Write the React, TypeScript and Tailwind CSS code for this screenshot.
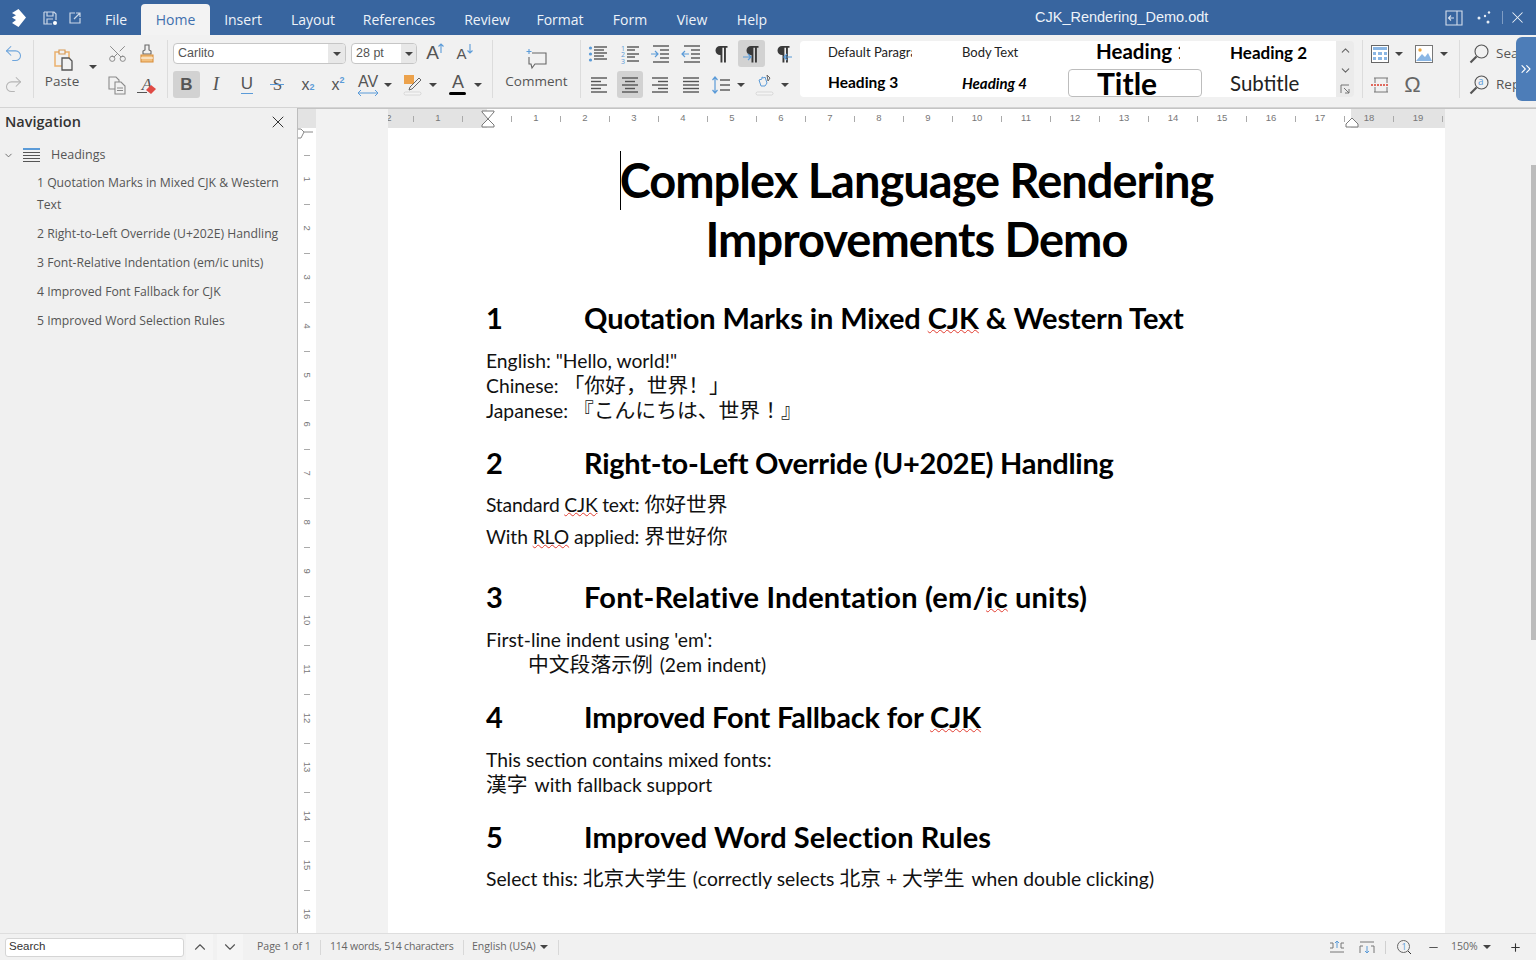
import React from "react";
import { Undo2, Redo2, Scissors, ChevronUp, ChevronDown, ChevronsRight, X, Plus, Minus } from "lucide-react";

const ui = "font-['Open_Sans',sans-serif]";
const doc = "font-['Lato','Noto_Sans_CJK_SC',sans-serif]";
const blue = "#5b9bd8";

const Caret = ({ className = "" }: { className?: string }) => (
  <span className={`flex w-[10px] items-center justify-center ${className}`}>
    <span className="h-0 w-0 border-x-[4px] border-t-[4px] border-x-transparent border-t-[#444]" />
  </span>
);

const Sep = () => <div className="mt-[5px] h-[58px] w-px shrink-0 bg-[#dcdcdc]" />;

const Cell = ({ w = 30, active, className = "", children }: { w?: number; active?: boolean; className?: string; children?: React.ReactNode }) => (
  <span
    style={{ width: w }}
    className={`flex h-[27px] shrink-0 items-center justify-center rounded-[3px] ${active ? "bg-[#d2d2d2]" : ""} ${className}`}
  >
    {children}
  </span>
);

const Row = ({ className = "", children }: { className?: string; children: React.ReactNode }) => (
  <div className={`flex h-[27px] items-center ${className}`}>{children}</div>
);

const Ic = ({ s = 20, children }: { s?: number; children: React.ReactNode }) => (
  <svg width={s} height={s} viewBox="0 0 20 20" fill="none" strokeWidth="1.2">
    {children}
  </svg>
);

const Lines = ({ rows }: { rows: number[][] }) => (
  <>
    {rows.map(([y, a, b], i) => (
      <path key={i} d={`M${a} ${y}H${b}`} stroke="#555" strokeWidth="1.4" />
    ))}
  </>
);

const Pilcrow = ({ fill = "#3a3a3a" }: { fill?: string }) => (
  <path d="M9 2h7.5v1.8h-1.6V18.5H13V3.8h-1.6v14.7H9.5v-7.5H9a4.5 4.5 0 0 1 0-9z" fill={fill} />
);

const Arrow = ({ y, from, to }: { y: number; from: number; to: number }) => (
  <path
    d={`M${from} ${y}H${to}M${to + (to > from ? -3 : 3)} ${y - 3}L${to} ${y}L${to + (to > from ? -3 : 3)} ${y + 3}`}
    stroke={blue}
    strokeWidth="1.2"
  />
);

const Lens = () => (
  <svg width="22" height="22" viewBox="0 0 22 22" fill="none" stroke="#555">
    <circle cx="13.5" cy="8.5" r="6.5" strokeWidth="1.1" />
    <path d="M8.5 13.5L2.5 19.5" strokeWidth="2.2" />
  </svg>
);

const tabs: [string, number][] = [
  ["File", 50],
  ["Home", 69],
  ["Insert", 66],
  ["Layout", 74],
  ["References", 98],
  ["Review", 78],
  ["Format", 68],
  ["Form", 72],
  ["View", 52],
  ["Help", 68],
];

const TitleBar = () => (
  <div className={`flex h-[35px] shrink-0 items-end bg-[#38659f] text-[14px] text-[#eef3f9] ${ui}`}>
    <div className="flex h-[35px] w-[35px] items-center justify-center">
      <svg width="18" height="20" viewBox="0 0 18 20">
        <path d="M3 5l6.5-4L17 9.5 9.5 19l-6.5-4 4-3-4-2.5 4-2.2z" fill="#fff" />
      </svg>
    </div>
    <div className="flex h-[35px] w-[56px] items-center">
      <span className="ml-[2px] flex w-[25px] justify-center">
        <svg width="16" height="16" viewBox="0 0 16 16" fill="none" stroke="#c9d6e7" strokeWidth="1.2">
          <path d="M2 2h10l2 2v6M2 2v12h8M5 2v4h6V2M5 14V9h6" />
          <circle cx="13" cy="13" r="2" fill="#fff" stroke="none" />
        </svg>
      </span>
      <span className="flex w-[25px] justify-center">
        <svg width="14" height="14" viewBox="0 0 14 14" fill="none" stroke="#c9d6e7" strokeWidth="1.2">
          <path d="M7 2H2v10h10V7M6 8l6-6M8 2h4v4" />
        </svg>
      </span>
    </div>
    {tabs.map(([t, w]) => (
      <div
        key={t}
        style={{ width: w }}
        className={
          t === "Home"
            ? "flex h-[31px] items-center justify-center rounded-t-[4px] bg-[#f3f3f3] pb-[1px] text-[#3f70ae]"
            : "flex h-[31px] items-center justify-center pb-[1px]"
        }
      >
        {t}
      </div>
    ))}
    <div className="flex h-[35px] flex-1 items-center">
      <span className="ml-[249px] font-['Liberation_Sans',sans-serif] text-[14.5px]">CJK_Rendering_Demo.odt</span>
      <span className="ml-[237px] flex items-center">
        <svg width="18" height="16" viewBox="0 0 18 16" fill="none" stroke="#d5dfec" strokeWidth="1.1">
          <path d="M1 1h16v14H1zM12 1v14M9 8H4M6 5.5L3.5 8 6 10.5" />
        </svg>
      </span>
      <span className="ml-[14px] flex">
        <svg width="14" height="14" viewBox="0 0 14 14" fill="#e6edf5">
          <circle cx="2" cy="7" r="1.5" />
          <circle cx="8" cy="5" r="1.2" />
          <circle cx="12" cy="1.5" r="1.2" />
          <circle cx="11" cy="11" r="1.5" />
        </svg>
      </span>
      <span className="ml-[11px] h-[13px] w-px bg-[#7f9dc4]" />
      <X size={19} strokeWidth={1.3} className="ml-[5px] text-[#eef3f9]" />
    </div>
  </div>
);

const styleItems: [string, string, boolean][] = [
  ["Default Paragraph", "text-[13px]", false],
  ["Body Text", "text-[13px]", false],
  ["Heading 1", "-mt-[3px] text-[20.5px] font-bold text-black", false],
  ["Heading 2", "text-[17px] font-bold text-black", false],
  ["Heading 3", "text-[15.5px] font-bold text-black", false],
  ["Heading 4", "text-[15px] font-bold italic text-black", false],
  ["Title", "text-[30px] font-bold text-black", true],
  ["Subtitle", "text-[20.5px] text-[#222]", false],
];

const Ribbon = () => (
  <div className={`relative flex h-[73px] shrink-0 overflow-hidden border-b border-[#d4d4d4] bg-[#f1f1f1] text-[#555] ${ui}`}>
    {/* undo */}
    <div className="flex w-[33px] shrink-0 flex-col gap-[4px] pt-[5px]">
      <Cell w={27}><Undo2 size={21} strokeWidth={1.2} color="#6ea5dc" /></Cell>
      <Cell w={27}><Redo2 size={21} strokeWidth={1.2} color="#b5b5b5" /></Cell>
    </div>
    <Sep />
    {/* clipboard */}
    <div className="flex w-[133px] shrink-0 pt-[5px] pl-[2px]">
      <div className="flex w-[52px] flex-col items-center">
        <div className="flex h-[31px] items-end">
          <svg width="24" height="24" viewBox="0 0 24 24" fill="none">
            <path d="M5 5h14v14H5z" stroke="#eab06c" strokeWidth="1.5" />
            <path d="M9 3h6v4H9z" fill="#f1f1f1" stroke="#d89a55" strokeWidth="1.2" />
            <path d="M12 11h7l3 3v9H12z" fill="#f1f1f1" stroke="#555" strokeWidth="1.3" />
          </svg>
        </div>
        <span className="text-[13.5px] leading-[20px]">Paste</span>
      </div>
      <Caret className="mt-[24px] h-[6px] w-[8px]" />
      <div className="ml-[4px] flex w-[60px] flex-col gap-[4px]">
        <Row>
          <Cell>
            <Scissors size={21} strokeWidth={1.1} color="#888" className="-rotate-90" />
          </Cell>
          <Cell>
            <svg width="18" height="20" viewBox="0 0 18 20" fill="none">
              <path d="M7 1h4v5l2 1v3H5V7l2-1z" stroke="#666" strokeWidth="1.1" />
              <path d="M3 11h12v7H3z" fill="#f2c07f" stroke="#d98f3c" strokeWidth="1.1" />
              <path d="M3 14h12" stroke="#fff" />
            </svg>
          </Cell>
        </Row>
        <Row>
          <Cell>
            <svg width="20" height="20" viewBox="0 0 20 20" fill="none" stroke="#8a8a8a" strokeWidth="1.1">
              <path d="M2 2h7l3 3v9H2z" />
              <path d="M8 7h6l4 4v8H8z" fill="#f1f1f1" />
              <path d="M10 13h6M10 15.5h6" />
            </svg>
          </Cell>
          <Cell className="relative">
            <span className="font-['Liberation_Serif',serif] text-[17px] text-[#555] italic">A</span>
            <svg className="absolute top-[12px] left-[12px]" width="14" height="12" viewBox="0 0 14 12">
              <path d="M2 7l5-5 5 4-5 5z" fill="#e04b45" />
            </svg>
            <span className="absolute top-[21px] left-[5px] h-px w-[10px] bg-[#555]" />
          </Cell>
        </Row>
      </div>
    </div>
    <Sep />
    {/* font */}
    <div className="flex w-[324px] shrink-0 flex-col gap-[4px] pt-[5px] pl-[5px]">
      <Row>
        <div className="flex h-[21px] w-[173px] items-center justify-between overflow-hidden rounded-[4px] border border-[#c6c6c6] bg-white pl-[4px] font-['Liberation_Sans',sans-serif] text-[12.5px]">
          Carlito
          <span className="flex h-full w-[17px] items-center justify-center bg-[#e8e8e8]"><Caret /></span>
        </div>
        <div className="ml-[5px] flex h-[21px] w-[66px] items-center justify-between overflow-hidden rounded-[4px] border border-[#c6c6c6] bg-white pl-[4px] font-['Liberation_Sans',sans-serif] text-[12.5px]">
          28 pt
          <span className="flex h-full w-[15px] items-center justify-center bg-[#e8e8e8]"><Caret /></span>
        </div>
        <Cell w={30} className="relative ml-[2px]">
          <span className="-ml-[3px] font-['Liberation_Sans',sans-serif] text-[19px] text-[#555]">A</span>
          <svg className="absolute top-[3px] right-[4px]" width="8" height="11" viewBox="0 0 8 11" fill="none" stroke={blue} strokeWidth="1.1">
            <path d="M4 10V1M1.5 3.5L4 1l2.5 2.5" />
          </svg>
        </Cell>
        <Cell w={28} className="relative">
          <span className="mt-[2px] -ml-[3px] font-['Liberation_Sans',sans-serif] text-[15px] text-[#555]">A</span>
          <svg className="absolute top-[3px] right-[3px]" width="8" height="11" viewBox="0 0 8 11" fill="none" stroke={blue} strokeWidth="1.1">
            <path d="M4 1v9M1.5 7.5L4 10l2.5-2.5" />
          </svg>
        </Cell>
      </Row>
      <Row className="font-['Liberation_Sans',sans-serif] text-[#555]">
        <Cell w={27} active><span className="text-[17px] font-bold">B</span></Cell>
        <Cell w={32}><span className="font-['Liberation_Serif',serif] text-[19px] italic">I</span></Cell>
        <Cell w={30} className="relative">
          <span className="-mt-[2px] text-[17px]">U</span>
          <span className="absolute top-[22px] left-[9px] h-px w-[12px] bg-[#5b9bd8]" />
        </Cell>
        <Cell w={31} className="relative">
          <span className="font-['Liberation_Serif',serif] text-[17px]">S</span>
          <span className="absolute top-[13px] left-[8px] h-px w-[14px] bg-[#5b9bd8]" />
        </Cell>
        <Cell w={30}>
          <span className="text-[16px]">x</span><span className="mt-[7px] text-[9px] font-bold text-[#5b9bd8]">2</span>
        </Cell>
        <Cell w={30}>
          <span className="text-[16px]">x</span><span className="mb-[7px] text-[9px] font-bold text-[#5b9bd8]">2</span>
        </Cell>
        <Cell w={30} className="relative">
          <span className="-mt-[5px] text-[16px]">AV</span>
          <svg className="absolute top-[18px] left-[4px]" width="22" height="8" viewBox="0 0 22 8" fill="none" stroke={blue} strokeWidth="1">
            <path d="M1 4h20M4 1L1 4l3 3M18 1l3 3-3 3" />
          </svg>
        </Cell>
        <Caret />
        <Cell w={30} className="ml-[5px]">
          <svg width="20" height="24" viewBox="0 0 20 24" fill="none">
            <rect x="1" y="2" width="10" height="9" fill="#eca24c" />
            <path d="M7 14l9-9 2 2-9 9-3 1z" fill="#f1f1f1" stroke="#666" />
            <rect x="1" y="19" width="17" height="3" rx="1.5" fill="#f4f4f4" stroke="#ccc" strokeWidth=".7" />
          </svg>
        </Cell>
        <Caret />
        <Cell w={30} className="relative ml-[5px]">
          <span className="-mt-[4px] text-[18px]">A</span>
          <span className="absolute top-[21px] left-[6px] h-[3px] w-[17px] rounded-[2px] bg-black" />
        </Cell>
        <Caret />
      </Row>
    </div>
    <Sep />
    {/* comment */}
    <div className="flex w-[87px] shrink-0 flex-col items-center pt-[5px]">
      <div className="flex h-[30px] items-end">
        <svg width="22" height="22" viewBox="0 0 22 22" fill="none" stroke="#666" strokeWidth="1.1">
          <path d="M6 5h14v11H9l-3 4-1-4H3V9" />
          <path d="M3 1v5M.5 3.5h5" stroke={blue} />
        </svg>
      </div>
      <span className="mt-[1px] text-[13.5px] leading-[20px]">Comment</span>
    </div>
    <Sep />
    {/* paragraph */}
    <div className="flex w-[219px] shrink-0 flex-col gap-[4px] pt-[5px]">
      <Row className="pl-[2px]">
        <Cell>
          <Ic>
            <circle cx="2.5" cy="4" r="1.6" fill={blue} />
            <circle cx="2.5" cy="10" r="1.6" fill={blue} />
            <circle cx="2.5" cy="16" r="1.6" fill={blue} />
            <Lines rows={[[3, 6, 19], [6, 6, 16], [9, 6, 19], [12, 6, 16], [15, 6, 19]]} />
          </Ic>
        </Cell>
        <Cell className="ml-[2px]">
          <svg width="20" height="20" viewBox="0 0 20 20" fill="none">
            <text x="1" y="6.5" fontSize="7" fill={blue}>1</text>
            <text x="1" y="13" fontSize="7" fill={blue}>2</text>
            <text x="1" y="19.5" fontSize="7" fill={blue}>3</text>
            <Lines rows={[[3, 7, 19], [6, 7, 15], [10, 7, 19], [13, 7, 15], [17, 7, 19]]} />
          </svg>
        </Cell>
        <Cell>
          <Ic>
            <Arrow y={10} from={1} to={8} />
            <Lines rows={[[2, 3, 19], [6, 10, 19], [10, 10, 19], [14, 10, 19], [18, 3, 19]]} />
          </Ic>
        </Cell>
        <Cell className="ml-[1px]">
          <Ic>
            <Arrow y={10} from={8} to={1} />
            <Lines rows={[[2, 3, 19], [6, 10, 19], [10, 10, 19], [14, 10, 19], [18, 3, 19]]} />
          </Ic>
        </Cell>
        <Cell><Ic><Pilcrow /></Ic></Cell>
        <Cell w={27} active className="ml-[2px]">
          <Ic>
            <Pilcrow />
            <Arrow y={13} from={1} to={9} />
          </Ic>
        </Cell>
        <Cell className="ml-[3px]">
          <Ic>
            <Pilcrow />
            <Arrow y={13} from={19} to={11} />
          </Ic>
        </Cell>
      </Row>
      <Row className="pl-[3px]">
        <Cell><Ic><Lines rows={[[3, 2, 18], [6.5, 2, 12], [10, 2, 18], [13.5, 2, 12], [17, 2, 18]]} /></Ic></Cell>
        <Cell w={26} active className="ml-[3px]"><Ic><Lines rows={[[3, 2, 18], [6.5, 5, 15], [10, 2, 18], [13.5, 5, 15], [17, 2, 18]]} /></Ic></Cell>
        <Cell className="ml-[2px]"><Ic><Lines rows={[[3, 2, 18], [6.5, 8, 18], [10, 2, 18], [13.5, 8, 18], [17, 2, 18]]} /></Ic></Cell>
        <Cell className="ml-[1px]"><Ic><Lines rows={[[3, 2, 18], [6.5, 2, 18], [10, 2, 18], [13.5, 2, 18], [17, 2, 18]]} /></Ic></Cell>
        <Cell>
          <Ic>
            <path d="M4 2v16M1.5 5L4 2l2.5 3M1.5 15L4 18l2.5-3" stroke={blue} />
            <Lines rows={[[5, 9, 19], [10, 9, 19], [15, 9, 19]]} />
          </Ic>
        </Cell>
        <Caret />
        <Cell className="ml-[4px]">
          <svg width="20" height="24" viewBox="0 0 20 24" fill="none">
            <path d="M4 7l3-1v-2l2 1 1-1 2 6-2 3H6z" stroke="#5b9bd8" />
            <path d="M12 2l3 3-2 3z" stroke="#666" />
            <rect x="1" y="19" width="17" height="3" rx="1.5" fill="#f4f4f4" stroke="#ccc" strokeWidth=".7" />
          </svg>
        </Cell>
        <Caret />
      </Row>
    </div>
    {/* styles */}
    <div className="mt-[6px] grid h-[56px] w-[536px] shrink-0 grid-cols-4 overflow-hidden rounded-l-[4px] bg-white font-['Lato',sans-serif] text-[#222]">
      {styleItems.map(([t, c, sel], i) => (
        <div
          key={t}
          className={`flex h-[28px] items-center overflow-hidden pl-[28px] ${i < 4 ? "pb-[4px]" : ""} ${sel ? "rounded-[4px] border border-[#bdbdbd]" : ""}`}
        >
          <span className={`block w-[84px] overflow-hidden whitespace-nowrap ${c}`}>{t}</span>
        </div>
      ))}
    </div>
    <div className="mt-[6px] flex h-[56px] w-[18px] shrink-0 flex-col items-center justify-between rounded-r-[4px] bg-[#ebebeb] py-[3px]">
      <ChevronUp size={13} color="#666" />
      <ChevronDown size={13} color="#666" />
      <svg width="10" height="10" viewBox="0 0 10 10" fill="none" stroke="#666" strokeWidth=".9">
        <path d="M1 9V1h8M4 4l5 5M5 9h4V5" />
      </svg>
    </div>
    <div className="w-[8px] shrink-0" />
    <Sep />
    {/* insert */}
    <div className="flex w-[96px] shrink-0 flex-col gap-[4px] pt-[5px] pl-[3px]">
      <Row>
        <Cell w={28}>
          <svg width="18" height="18" viewBox="0 0 18 18">
            <rect x=".5" y=".5" width="17" height="17" fill="#fff" stroke="#666" />
            <path d="M2 2h14v3H2zM2 7h3v3H2zm5 0h4v3H7zm6 0h3v3h-3zM2 12h3v3H2zm5 0h4v3H7zm6 0h3v3h-3z" fill="#8ab6e4" />
          </svg>
        </Cell>
        <Caret />
        <Cell w={28} className="ml-[7px]">
          <svg width="20" height="18" viewBox="0 0 20 18" fill="none">
            <rect x=".5" y=".5" width="17" height="17" fill="#fff" stroke="#777" />
            <circle cx="5" cy="5" r="1.7" fill="#eaa540" />
            <path d="M1 16l6-7 3 3 3-4 4 8z" fill="#8ab6e4" />
          </svg>
        </Cell>
        <Caret />
      </Row>
      <Row>
        <Cell w={28}>
          <svg width="20" height="20" viewBox="0 0 20 20" fill="none">
            <path d="M4 3h14M4 17h14M5 3v5M17 3v5M5 12v5M17 12v5" stroke="#777" />
            <path d="M1 10h17" stroke="#e06a5e" strokeDasharray="2 1" strokeWidth="2" />
          </svg>
        </Cell>
        <Cell w={31} className="ml-[3px]"><span className="font-['Liberation_Sans',sans-serif] text-[22px] text-[#666]">Ω</span></Cell>
      </Row>
    </div>
    <Sep />
    {/* find */}
    <div className="flex flex-1 flex-col gap-[4px] pt-[5px] pl-[5px] text-[13.5px]">
      <Row>
        <Cell w={28}><Lens /></Cell>
        <span className="ml-[3px]">Search</span>
      </Row>
      <Row>
        <Cell w={28} className="relative">
          <Lens />
          <span className="absolute top-[3px] left-[13px] text-[10px] text-[#5b9bd8]">a</span>
        </Cell>
        <span className="ml-[3px]">Replace</span>
      </Row>
    </div>
    <div className="absolute top-[2px] right-0 flex h-[64px] w-[20px] items-center justify-center rounded-l-[6px] bg-[#4d7db8] text-white">
      <ChevronsRight size={16} strokeWidth={1.6} />
    </div>
  </div>
);

const Nav = () => (
  <aside className={`flex w-[297px] shrink-0 flex-col bg-[#f0f0f0] text-[#555] ${ui}`}>
    <div className="flex h-[27px] items-center justify-between pr-[9px] pl-[5px]">
      <span className="text-[14.5px] font-semibold text-[#333]">Navigation</span>
      <X size={20} strokeWidth={1.2} color="#333" />
    </div>
    <div className="mt-[8px] flex h-[24px] items-center text-[12.5px]">
      <ChevronDown size={11} className="ml-[3px]" color="#666" />
      <span className="ml-[9px] flex w-[17px] flex-col gap-[2px]">
        <span className="h-[2px] bg-[#5b9bd8]" />
        <span className="h-px bg-[#555]" />
        <span className="h-px bg-[#555]" />
        <span className="h-px bg-[#555]" />
        <span className="h-px bg-[#555]" />
      </span>
      <span className="ml-[11px]">Headings</span>
    </div>
    <ul className="mt-[5px] flex w-[287px] flex-col gap-[7px] pl-[37px] text-[12.2px] leading-[22px]">
      <li>1 Quotation Marks in Mixed CJK &amp; Western Text</li>
      <li>2 Right-to-Left Override (U+202E) Handling</li>
      <li>3 Font-Relative Indentation (em/ic units)</li>
      <li>4 Improved Font Fallback for CJK</li>
      <li>5 Improved Word Selection Rules</li>
    </ul>
  </aside>
);

const Tick = () => <span className="h-[6px] w-px bg-[#aaa]" />;

const HCell = ({ n }: { n?: number }) => (
  <span className="flex w-[24.5px] shrink-0 justify-center text-[9.5px] text-[#777]">{n ?? <Tick />}</span>
);

const whiteCells: (number | undefined)[] = [];
for (let i = 1; i <= 17; i++) whiteCells.push(undefined, i);
whiteCells.push(undefined);

const HRuler = () => (
  <div className="relative flex h-[20px] shrink-0 border-t border-[#c4c4c4] bg-[#f2f2f2] font-['Liberation_Sans',sans-serif]">
    <div className="w-[18px] bg-[#e3e3e3]" />
    <div className="w-[72px]" />
    <div className="flex w-[99px] items-center overflow-hidden bg-[#e3e3e3]">
      <div className="-ml-[11.25px] flex items-center">
        <HCell n={2} /><HCell /><HCell n={1} /><HCell />
      </div>
    </div>
    <div className="flex w-[864px] items-center overflow-hidden bg-white pl-[12.25px]">
      {whiteCells.map((n, i) => <HCell key={i} n={n} />)}
    </div>
    <div className="flex w-[94px] items-center overflow-hidden bg-[#e3e3e3] pl-[5.75px]">
      <HCell n={18} /><HCell /><HCell n={19} /><HCell />
    </div>
    {/* margin markers */}
    <svg className="absolute top-[1px] left-[182px]" width="16" height="18" viewBox="0 0 16 18" fill="#fff" stroke="#777">
      <path d="M2 1h12v1L8 9l6 6v2H2v-2l6-6-6-7z" />
    </svg>
    <svg className="absolute top-[8px] left-[1047px]" width="14" height="11" viewBox="0 0 14 11" fill="#fff" stroke="#777">
      <path d="M7 1l6 6v3H1V7z" />
    </svg>
  </div>
);

const vCells: (number | undefined)[] = [];
for (let i = 1; i <= 16; i++) vCells.push(undefined, i);

const VRuler = () => (
  <div className="relative flex w-[18px] shrink-0 flex-col overflow-hidden bg-white pt-[14.75px] font-['Liberation_Sans',sans-serif]">
    {vCells.map((n, i) => (
      <span key={i} className="flex h-[24.5px] shrink-0 items-center justify-center text-[9.5px] text-[#777]">
        {n ? <span className="rotate-90">{n}</span> : <span className="h-px w-[6px] bg-[#aaa]" />}
      </span>
    ))}
    <svg className="absolute top-0 left-0" width="16" height="12" viewBox="0 0 16 12" fill="#fff" stroke="#888">
      <path d="M0 1h3l3 3-3 6H0M6 4h9" />
    </svg>
  </div>
);

const Cjk = ({ children }: { children: React.ReactNode }) => (
  <span className="font-['Noto_Sans_CJK_SC',sans-serif] text-[20.8px] leading-none">{children}</span>
);

const Sq = ({ children }: { children: React.ReactNode }) => (
  <span className="underline decoration-[#e23c30] decoration-wavy decoration-1 underline-offset-0">{children}</span>
);

const H = ({ n, className = "", children }: { n: number; className?: string; children: React.ReactNode }) => (
  <h2 className={`flex h-[40px] items-center text-[29px] font-bold text-black ${className}`}>
    <span className="w-[98px]">{n}</span>
    <span>{children}</span>
  </h2>
);

const Page = () => (
  <div className="min-h-0 flex-1 overflow-hidden bg-[#f2f2f2] pl-[72px]">
    <div className={`h-full w-[1057px] bg-white pt-[23px] pl-[98px] text-[19.3px] text-[#111] ${doc}`}>
      <h1 className="-ml-[98px] text-center text-[47px] leading-[59px] font-bold tracking-[-1px] text-black">
        <span className="relative">
          <span className="absolute top-[-1px] left-0 h-[59px] w-px bg-black" />
          Complex Language Rendering
        </span>
        <br />
        Improvements Demo
      </h1>
      <H n={1} className="mt-[29px] tracking-[-0.1px]">Quotation Marks in Mixed <Sq>CJK</Sq> &amp; Western Text</H>
      <div className="mt-[10px] leading-[25px]">
        <p>English: "Hello, world!"</p>
        <p>Chinese: <Cjk>「你好，世界！」</Cjk></p>
        <p>Japanese: <span className="font-['Noto_Sans_CJK_JP',sans-serif] text-[20.8px] leading-none">『こんにちは、世界！』</span></p>
      </div>
      <H n={2} className="mt-[20px] tracking-[-0.28px]">Right-to-Left Override (U+202E) Handling</H>
      <div className="mt-[6px] leading-[32px]">
        <p><span className="tracking-[-0.2px]">Standard <Sq>CJK</Sq> text:</span> <Cjk>你好世界</Cjk></p>
        <p><span className="tracking-[-0.1px]">With <Sq>RLO</Sq> applied:</span> <Cjk>界世好你</Cjk></p>
      </div>
      <H n={3} className="mt-[24px] tracking-[0.18px]">Font-Relative Indentation (em/<Sq>ic</Sq> units)</H>
      <div className="mt-[10px] leading-[25px]">
        <p>First-line indent using 'em':</p>
        <p className="pl-[42px]"><Cjk>中文段落示例</Cjk> <span className="ml-[2px]">(2em indent)</span></p>
      </div>
      <H n={4} className="mt-[20px] tracking-[-0.17px]">Improved Font Fallback for <Sq>CJK</Sq></H>
      <div className="mt-[10px] leading-[25px]">
        <p>This section contains mixed fonts:</p>
        <p><Cjk>漢字</Cjk> <span className="ml-[2px]">with fallback support</span></p>
      </div>
      <H n={5} className="mt-[20px] tracking-[0.08px]">Improved Word Selection Rules</H>
      <p className="mt-[9px] leading-[25px]">
        Select this: <Cjk>北京大学生</Cjk> <span className="ml-[1px]">(correctly selects</span> <Cjk>北京</Cjk> + <Cjk>大学生</Cjk> <span className="ml-[2px]">when double clicking)</span>
      </p>
    </div>
  </div>
);

const SSep = () => <span className="h-[15px] w-px bg-[#d8d8d8]" />;

const StatusBar = () => (
  <div className={`flex h-[27px] shrink-0 items-center border-t border-[#dedede] bg-[#f1f1f1] text-[10.5px] text-[#666] ${ui}`}>
    <div className="ml-[5px] flex h-[19px] w-[179px] items-center rounded-[3px] border border-[#d5d5d5] bg-white pl-[3px] font-['Liberation_Sans',sans-serif] text-[11.5px] text-[#333]">
      Search
    </div>
    <span className="ml-[2px] flex h-[27px] w-[27px] items-center justify-center bg-[#f5f5f5]"><ChevronUp size={18} strokeWidth={1.5} color="#555" /></span>
    <span className="ml-[4px] flex h-[27px] w-[26px] items-center justify-center bg-[#f5f5f5]"><ChevronDown size={18} strokeWidth={1.5} color="#555" /></span>
    <span className="ml-[6px]"><SSep /></span>
    <span className="ml-[8px] w-[63px] whitespace-nowrap">Page 1 of 1</span>
    <SSep />
    <span className="ml-[9px] w-[133px] whitespace-nowrap tracking-[-0.2px]">114 words, 514 characters</span>
    <SSep />
    <span className="ml-[8px] flex w-[86px] items-center whitespace-nowrap">
      English (USA)
      <Caret className="ml-[3px]" />
    </span>
    <SSep />
    <div className="ml-[770px] flex items-center">
      <svg width="16" height="14" viewBox="0 0 16 14" fill="none" stroke="#777">
        <path d="M1 3h3v5H1M15 3h-3v5h3M1 12h14" />
        <path d="M8 8V1M6 3l2-2 2 2" stroke={blue} />
      </svg>
      <svg className="ml-[14px]" width="16" height="14" viewBox="0 0 16 14" fill="none" stroke="#777">
        <path d="M1 2h14M1 13V6h3M15 13V6h-3" />
        <path d="M8 6v7M6 11l2 2 2-2" stroke={blue} />
      </svg>
      <span className="ml-[10px] h-[13px] w-px bg-[#d0d0d0]" />
      <svg className="ml-[10px]" width="16" height="16" viewBox="0 0 16 16" fill="none">
        <circle cx="7.5" cy="7.5" r="6" stroke="#666" />
        <text x="5.5" y="11" fontSize="9" fill={blue}>1</text>
        <path d="M12 12l3 3" stroke="#333" />
      </svg>
      <Minus size={13} className="ml-[15px]" color="#555" />
      <span className="ml-[11px] whitespace-nowrap">150%</span>
      <Caret className="ml-[4px]" />
      <Plus size={13} className="ml-[17px]" color="#333" />
    </div>
  </div>
);

export default function App() {
  return (
    <div className="relative flex h-[960px] w-[1536px] flex-col overflow-hidden bg-[#f2f2f2]">
      <TitleBar />
      <Ribbon />
      <div className="flex min-h-0 flex-1">
        <Nav />
        <div className="w-px shrink-0 bg-[#bdbdbd]" />
        <div className="flex min-w-0 flex-1 flex-col">
          <HRuler />
          <div className="flex min-h-0 flex-1">
            <VRuler />
            <Page />
          </div>
        </div>
      </div>
      <StatusBar />
      <div className="absolute top-[165px] right-0 h-[475px] w-[5px] bg-[#bcbcbc]" />
    </div>
  );
}
